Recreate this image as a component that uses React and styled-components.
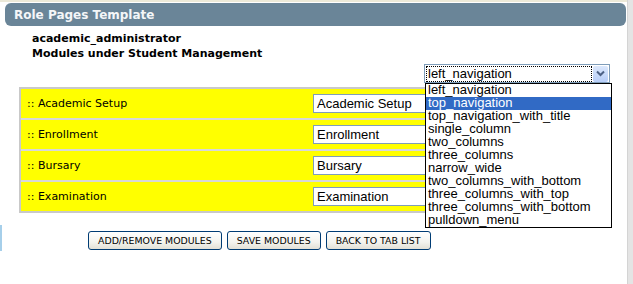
import React from 'react';
import styled, { createGlobalStyle } from 'styled-components';

const GlobalStyle = createGlobalStyle`
  html, body {
    margin: 0;
    padding: 0;
    background: #ffffff;
  }
  body {
    font-family: "DejaVu Sans", Verdana, sans-serif;
    font-size: 11px;
    color: #000;
  }
`;

const modules = ['Academic Setup', 'Enrollment', 'Bursary', 'Examination'];

const templates = [
  'left_navigation',
  'top_navigation',
  'top_navigation_with_title',
  'single_column',
  'two_columns',
  'three_columns',
  'narrow_wide',
  'two_columns_with_bottom',
  'three_columns_with_top',
  'three_columns_with_bottom',
  'pulldown_menu',
];

const Page = styled.div`
  display: flex;
  width: 633px;
  height: 284px;
  overflow: hidden;
  background: #ece9d8;
`;

const Main = styled.div`
  position: relative;
  flex: 1;
  margin-top: 2px;
  background: #ffffff;
  display: flex;
  flex-direction: column;
`;

const ScrollEdge = styled.div`
  width: 5px;
  background: #e4e4e4;
  border-left: 1px solid #d4d4d4;
`;

const Header = styled.div`
  margin: 1px 1px 0 5px;
  height: 23px;
  border-radius: 6px;
  background: #6a8598;
  display: flex;
  align-items: center;
  padding-left: 9px;
  font-family: "DejaVu Sans", Verdana, sans-serif;
  font-weight: bold;
  font-size: 12px;
  color: #f4f6f8;
`;

const Info = styled.div`
  margin: 5px 0 0 32px;
  font-weight: bold;
  font-size: 11px;
  line-height: 15px;
`;

const SelectRow = styled.div`
  display: flex;
  justify-content: flex-end;
  margin: 3px 17px 0 0;
`;

const SelectWrap = styled.div`
  position: relative;
  width: 186px;
`;

const SelectBox = styled.div`
  height: 17px;
  border: 1px solid #7f9db9;
  display: flex;
  align-items: center;
  padding: 0 1px;
  background: #fff;
`;

const SelectValue = styled.span`
  flex: 1;
  height: 14px;
  border: 1px dotted #000;
  font-family: "Liberation Sans", Arial, sans-serif;
  font-size: 13px;
  line-height: 13px;
  padding-left: 1px;
  margin-right: 1px;
`;

const ArrowButton = styled.span`
  width: 15px;
  height: 16px;
  border-radius: 2px;
  background: linear-gradient(#dce8fc, #b6cdf8);
  display: flex;
  align-items: center;
  justify-content: center;
`;

const List = styled.ul`
  position: absolute;
  top: 19px;
  left: 1px;
  width: 185px;
  margin: 0;
  padding: 0;
  list-style: none;
  background: #fff;
  border: 1px solid #000;
  z-index: 2;
`;

const Option = styled.li`
  height: 13px;
  line-height: 12px;
  padding-left: 2px;
  font-family: "Liberation Sans", Arial, sans-serif;
  font-size: 13px;
  background: ${(p) => (p.active ? '#316ac5' : '#fff')};
  color: ${(p) => (p.active ? '#fff' : '#000')};
`;

const Table = styled.div`
  margin: 4px 0 0 19px;
  width: 478px;
  border: 2px solid #c9c9c9;
  background: #d8d8d8;
  display: flex;
  flex-direction: column;
  gap: 2px;
`;

const Row = styled.div`
  height: 29px;
  background: #ffff00;
  display: flex;
  align-items: center;
`;

const Label = styled.span`
  width: 286px;
  padding-left: 6px;
  font-size: 11px;
`;

const TextInput = styled.div`
  width: 176px;
  height: 17px;
  border: 1px solid #7f9db9;
  background: #fff;
  padding-left: 3px;
  font-family: "Liberation Sans", Arial, sans-serif;
  font-size: 13px;
  line-height: 17px;
`;

const Buttons = styled.div`
  display: flex;
  gap: 5px;
  margin: 18px 0 0 88px;
`;

const Button = styled.button`
  height: 19px;
  padding: 0 9px;
  border: 1px solid #003c74;
  border-radius: 3px;
  background: linear-gradient(#ffffff, #f3f3ee 60%, #e2e0d6);
  font-family: "DejaVu Sans", Verdana, sans-serif;
  font-size: 9.4px;
  color: #000;
  line-height: 17px;
`;

const SideMark = styled.div`
  position: absolute;
  left: 0;
  top: 223px;
  width: 2px;
  height: 26px;
  background: #a6cfea;
`;

export default function App() {
  return (
    <>
      <GlobalStyle />
      <Page>
        <Main>
          <Header>Role Pages Template</Header>
          <Info>
            <div>academic_administrator</div>
            <div>Modules under Student Management</div>
          </Info>
          <SelectRow>
            <SelectWrap>
              <SelectBox>
                <SelectValue>left_navigation</SelectValue>
                <ArrowButton>
                  <svg width="9" height="7" viewBox="0 0 9 7">
                    <path d="M1 1.5 L4.5 5 L8 1.5" fill="none" stroke="#4d6185" strokeWidth="2" />
                  </svg>
                </ArrowButton>
              </SelectBox>
              <List>
                {templates.map((t) => (
                  <Option key={t} active={t === 'top_navigation'}>
                    {t}
                  </Option>
                ))}
              </List>
            </SelectWrap>
          </SelectRow>
          <Table>
            {modules.map((m) => (
              <Row key={m}>
                <Label>:: {m}</Label>
                <TextInput>{m}</TextInput>
              </Row>
            ))}
          </Table>
          <Buttons>
            <Button>ADD/REMOVE MODULES</Button>
            <Button>SAVE MODULES</Button>
            <Button>BACK TO TAB LIST</Button>
          </Buttons>
          <SideMark />
        </Main>
        <ScrollEdge />
      </Page>
    </>
  );
}
